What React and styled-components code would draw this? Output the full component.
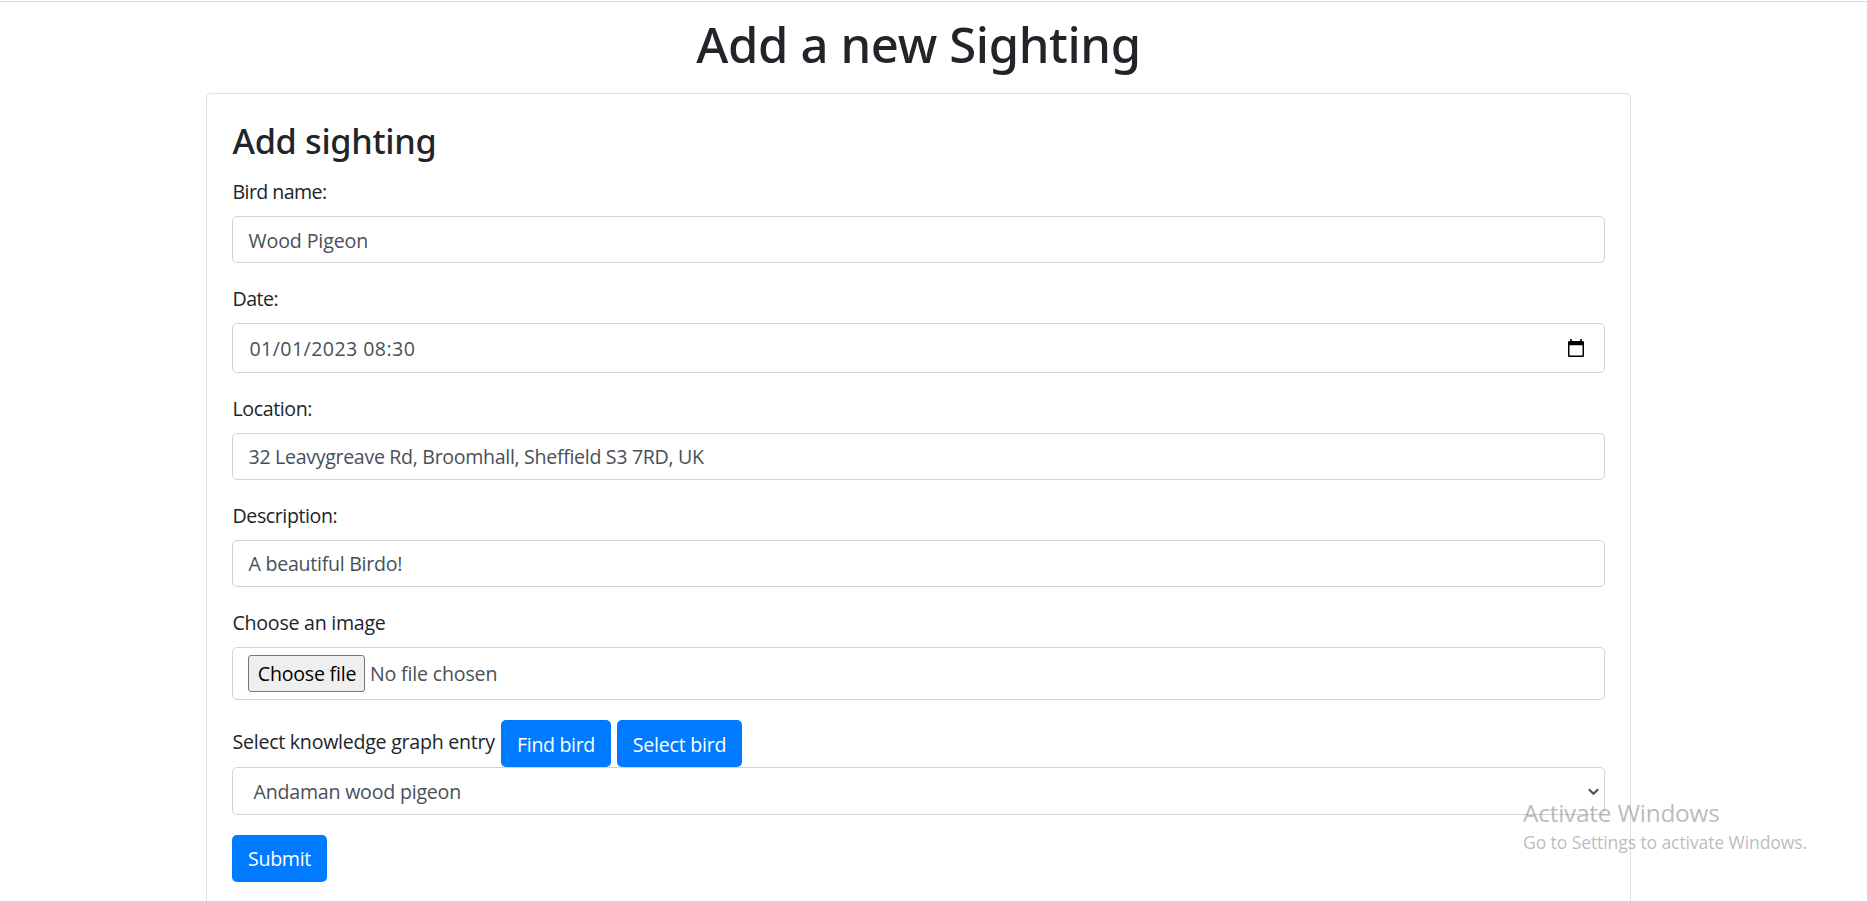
import React from "react";
import styled, { createGlobalStyle } from "styled-components";

const GlobalStyle = createGlobalStyle`
  *, *::before, *::after { box-sizing: border-box; }
  html, body { height: 100%; overflow: hidden; }
  body {
    margin: 0;
    background: #fff;
    color: #212529;
    font: 400 19.6px/30px "Open Sans", "Noto Sans", sans-serif;
  }
`;

const Page = styled.div`
  height: 901px;
  overflow: hidden;
  padding-top: 1px;
`;

const TopRule = styled.div`
  height: 1px;
  background: #dcdddd;
`;

const Container = styled.main`
  width: 1425px;
  margin-left: 206px;
  padding-top: 12px;
`;

const PageTitle = styled.h1`
  margin: 0 0 19px;
  font: 500 49px/60px "Noto Sans", sans-serif;
  letter-spacing: -0.36px;
  text-align: center;
`;

const Card = styled.section`
  height: 900px;
  padding: 25px;
  border: 1px solid #dfdfdf;
  border-radius: 5px;
`;

const CardTitle = styled.h3`
  margin: 0 0 14px;
  padding: 1px 0 0 0.5px;
  font: 500 34.3px/42px "Noto Sans", sans-serif;
  letter-spacing: -0.33px;
`;

const Text = styled.span`
  display: inline-block;
  padding-top: ${(p) => p.$padTop || 0}px;
  letter-spacing: ${(p) => p.$track || 0}px;
  white-space: pre;
`;

const Group = styled.div`
  margin-bottom: 20px;
`;

const Label = styled.label`
  display: block;
  height: 30px;
  margin-bottom: 10px;
  padding: 1px 0 0 0.5px;
`;

const Control = styled.div`
  display: flex;
  align-items: center;
  height: ${(p) => p.$height || 47}px;
  padding: 0 15px 0 15.5px;
  border: 1px solid #ced4da;
  border-radius: 5px;
  color: #495057;
`;

const FileControl = styled(Control)`
  padding-left: 15px;
`;

const DateControl = styled(Control)`
  justify-content: space-between;
  padding: 0 20px 0 16.5px;
`;

const SelectControl = styled(Control)`
  justify-content: space-between;
  padding: 2px 5.5px 0 20.5px;
`;

const FileButton = styled.button`
  width: 117px;
  height: 37px;
  margin-right: 5px;
  padding: 0 0 0 1px;
  border: 1px solid #767676;
  border-radius: 3px;
  background: #efefef;
  color: #000;
  font: inherit;
  line-height: 34px;
`;

const EntryRow = styled.div`
  display: flex;
  align-items: flex-start;
  height: 47px;
`;

const EntryLabel = styled.label`
  width: 269px;
  padding: 7px 0 0 0.5px;
`;

const Button = styled.button`
  width: ${(p) => p.$width}px;
  height: 47px;
  margin-right: 6px;
  padding: 0;
  border: 0;
  border-radius: 5px;
  background: #007bff;
  color: #fff;
  font: inherit;
  line-height: 30px;
`;

const Watermark = styled.aside`
  position: absolute;
  left: 1523px;
  top: 796px;
  color: rgba(120, 120, 120, 0.5);
  white-space: nowrap;
`;

const WatermarkTitle = styled.div`
  font-size: 24.4px;
  line-height: 34px;
  letter-spacing: -0.22px;
`;

const WatermarkNote = styled.div`
  font-size: 17.6px;
  line-height: 24px;
  letter-spacing: -0.12px;
`;

const CalendarIcon = () => (
  <svg width="16" height="19" viewBox="0 0 16 19">
    <path d="M2.2 0h1.6v2.5H2.2zM12.2 0h1.6v2.5h-1.6z" />
    <path
      fillRule="evenodd"
      d="M1.2 2h13.6Q16 2 16 3.2v13.6q0 1.2-1.2 1.2H1.2Q0 18 0 16.800V3.200Q0 2 1.200 2zM1.500 6.300v10.200h13V6.300z"
    />
  </svg>
);

const ChevronIcon = () => (
  <svg width="11" height="8" viewBox="0 0 11 8" fill="none" stroke="#495057" strokeWidth="2.1">
    <path d="M0.800 1.200L5.500 5.700L10.200 1.200" />
  </svg>
);

function Field({ label, labelTrack, value, valueTrack, valuePadTop }) {
  return (
    <Group>
      <Label><Text $track={labelTrack}>{label}</Text></Label>
      <Control><Text $track={valueTrack} $padTop={valuePadTop}>{value}</Text></Control>
    </Group>
  );
}

export default function App() {
  return (
    <Page>
      <GlobalStyle />
      <TopRule />
      <Container>
        <PageTitle>Add a new Sighting</PageTitle>
        <Card>
          <CardTitle>Add sighting</CardTitle>
          <Field label="Bird name:" labelTrack={-0.58} value="Wood Pigeon" valueTrack={-0.12} valuePadTop={2} />
          <Group>
            <Label><Text $track={-0.5}>Date:</Text></Label>
            <DateControl $height={50}>
              <Text $track={0.42} $padTop={2}>01/01/2023 08:30</Text>
              <CalendarIcon />
            </DateControl>
          </Group>
          <Field
            label="Location:"
            labelTrack={-0.4}
            value="32 Leavygreave Rd, Broomhall, Sheffield S3 7RD, UK"
            valueTrack={-0.32}
          />
          <Field label="Description:" labelTrack={-0.42} value="A beautiful Birdo!" valueTrack={-0.27} />
          <Group>
            <Label><Text $track={-0.26}>Choose an image</Text></Label>
            <FileControl $height={53}>
              <FileButton><Text $track={-0.22}>Choose file</Text></FileButton>
              <Text $track={-0.18}>No file chosen</Text>
            </FileControl>
          </Group>
          <Group>
            <EntryRow>
              <EntryLabel><Text $track={-0.26}>Select knowledge graph entry</Text></EntryLabel>
              <Button $width={110}><Text $track={-0.35} $padTop={2}>Find bird</Text></Button>
              <Button $width={125}><Text $track={-0.25} $padTop={2}>Select bird</Text></Button>
            </EntryRow>
            <SelectControl $height={48}>
              <Text $track={-0.22}>Andaman wood pigeon</Text>
              <ChevronIcon />
            </SelectControl>
          </Group>
          <Button $width={95}><Text $track={-0.3}>Submit</Text></Button>
        </Card>
      </Container>
      <Watermark>
        <WatermarkTitle>Activate Windows</WatermarkTitle>
        <WatermarkNote>Go to Settings to activate Windows.</WatermarkNote>
      </Watermark>
    </Page>
  );
}
